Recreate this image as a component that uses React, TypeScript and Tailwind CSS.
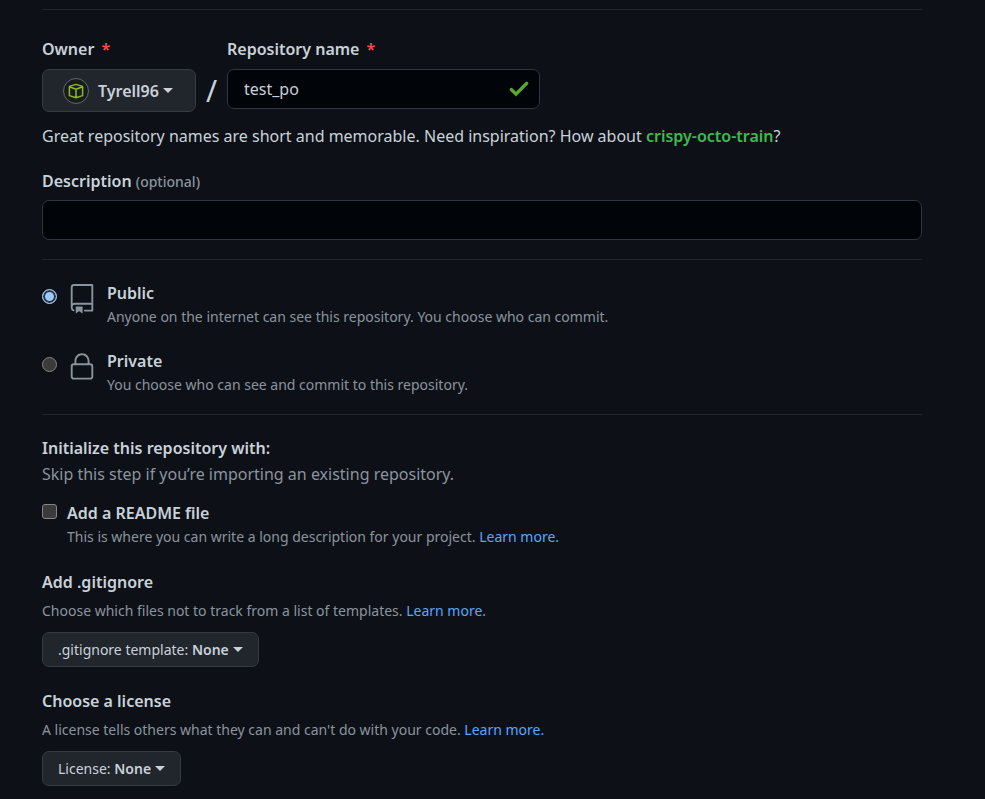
import { useState } from "react";
import type { ReactNode } from "react";

function Caret() {
  return (
    <span
      aria-hidden="true"
      className="inline-block shrink-0 border-x-5 border-t-5 border-x-transparent border-t-current"
    />
  );
}

function Divider() {
  return <hr className="border-0 border-t border-[#21262d]" />;
}

function Required() {
  return <span className="ml-[7px] text-[#f85149]">*</span>;
}

function LearnMore() {
  return (
    <a href="#learn-more" className="text-[#58a6ff]">
      Learn more.
    </a>
  );
}

function Avatar() {
  return (
    <svg width="26" height="26" viewBox="0 0 26 26" fill="none" aria-hidden="true">
      <circle cx="13" cy="13" r="12.5" fill="#171c20" stroke="#62686d" />
      <path
        d="M13 6.4 L19.6 8.4 V17.6 L13 19.8 L6.4 17.6 V8.4 Z M6.4 8.8 L13 11.2 L19.6 8.8 M13 11.2 V19.8"
        stroke="#8fb81a"
        strokeWidth="1.5"
        strokeLinejoin="round"
      />
    </svg>
  );
}

function RepoIcon() {
  return (
    <svg width="30" height="30" viewBox="0 0 24 24" fill="#8b949e" aria-hidden="true">
      <path
        fillRule="evenodd"
        d="M3 2.75A2.75 2.75 0 015.75 0h14.5a.75.75 0 01.75.75v20.5a.75.75 0 01-.75.75h-6a.75.75 0 010-1.5h5.25v-4H6A1.5 1.5 0 004.5 18v.75c0 .716.43 1.334 1.05 1.605a.75.75 0 01-.6 1.374A3.25 3.25 0 013 18.75v-16zM19.5 1.5V15H6c-.546 0-1.059.146-1.5.401V2.75c0-.69.56-1.25 1.25-1.25H19.5z"
      />
      <path d="M7 18.25a.25.25 0 01.25-.25h5a.25.25 0 01.25.25v5.01a.25.25 0 01-.397.201l-2.206-1.604a.25.25 0 00-.294 0L7.397 23.46a.25.25 0 01-.397-.2v-5.01z" />
    </svg>
  );
}

function LockIcon() {
  return (
    <svg width="30" height="30" viewBox="0 0 24 24" fill="#8b949e" aria-hidden="true">
      <path
        fillRule="evenodd"
        d="M6 9V7.25C6 3.845 8.503 1 12 1s6 2.845 6 6.25V9h.5a2.5 2.5 0 012.5 2.5v8a2.5 2.5 0 01-2.5 2.5h-13A2.5 2.5 0 013 19.5v-8A2.5 2.5 0 015.5 9H6zm1.5-1.75C7.5 4.58 9.422 2.5 12 2.5c2.578 0 4.5 2.08 4.5 4.75V9h-9V7.25zm-3 4.25a1 1 0 011-1h13a1 1 0 011 1v8a1 1 0 01-1 1h-13a1 1 0 01-1-1v-8z"
      />
    </svg>
  );
}

function CheckIcon() {
  return (
    <svg width="20" height="16" viewBox="0 0 20 16" fill="none" aria-hidden="true">
      <path
        d="M2.4 8.6 L7 13.2 L17.6 2.4"
        stroke="#57ab2b"
        strokeWidth="3.4"
        strokeLinecap="round"
      />
    </svg>
  );
}

type VisibilityProps = {
  value: string;
  title: string;
  hint: string;
  icon: ReactNode;
  checked: boolean;
  onSelect: (value: string) => void;
};

function VisibilityOption({ value, title, hint, icon, checked, onSelect }: VisibilityProps) {
  return (
    <div className="flex items-start">
      <input
        type="radio"
        name="visibility"
        id={value}
        value={value}
        checked={checked}
        onChange={() => onSelect(value)}
        className="mt-[9px] size-[15px] shrink-0 appearance-none rounded-full border border-[#858585] bg-[#3b3b3b] checked:border-[#99c8ff] checked:bg-[#99c8ff] checked:shadow-[inset_0_0_0_2px_#303236]"
      />
      <label htmlFor={value} className="flex items-start">
        <span className="mt-1 mr-[10px] ml-[10px]">{icon}</span>
        <span className="block">
          <span className="block font-semibold">{title}</span>
          <span className="block text-[14px] leading-[22px] text-[#8b949e]">{hint}</span>
        </span>
      </label>
    </div>
  );
}

type TemplateProps = { title: string; hint: string; label: string };

function TemplatePicker({ title, hint, label }: TemplateProps) {
  return (
    <section>
      <h2 className="font-semibold">{title}</h2>
      <p className="mt-[5px] text-[14px] leading-[22px] text-[#8b949e]">
        {hint} <LearnMore />
      </p>
      <button
        type="button"
        className="mt-[10px] flex h-[35px] items-center gap-1 rounded-[7px] border border-[#363b42] bg-[#21262d] px-[15px] text-[14px]"
      >
        <span>
          {label}: <span className="font-semibold">None</span>
        </span>
        <Caret />
      </button>
    </section>
  );
}

export default function App() {
  const [name, setName] = useState("test_po");
  const [description, setDescription] = useState("");
  const [visibility, setVisibility] = useState("public");

  return (
    <main className="min-h-screen bg-[#0d1117] pt-[9px] pr-[63px] pb-[13px] pl-[42px] font-['Noto_Sans',sans-serif] text-[16px] leading-[26px] text-[#c9d1d9]">
      <Divider />
      <form onSubmit={(event) => event.preventDefault()}>
        <div className="mt-[26px] flex items-start">
          <div className="w-[154px]">
            <label htmlFor="owner" className="block font-semibold">
              Owner
              <Required />
            </label>
            <button
              type="button"
              id="owner"
              className="mt-[7px] flex h-[43px] w-full items-center rounded-[7px] border border-[#363b42] bg-[#21262d] px-5 font-semibold"
            >
              <Avatar />
              <span className="mr-1 ml-[9px]">Tyrell96</span>
              <Caret />
            </button>
          </div>
          <span className="mt-[33px] w-[31px] text-center text-[30px] leading-[43px]">/</span>
          <div className="w-[313px]">
            <label htmlFor="repository" className="block font-semibold">
              Repository name
              <Required />
            </label>
            <div className="mt-[7px] flex h-10 items-center rounded-[7px] border border-[#30363d] bg-[#010409] pr-[10px] pl-4">
              <input
                id="repository"
                type="text"
                value={name}
                onChange={(event) => setName(event.target.value)}
                className="min-w-0 flex-1 bg-transparent outline-none"
              />
              <CheckIcon />
            </div>
          </div>
        </div>
        <p className="mt-[11px]">
          Great repository names are short and memorable. Need inspiration? How about{" "}
          <a href="#suggestion" className="font-semibold text-[#3fb950]">
            crispy-octo-train
          </a>
          ?
        </p>

        <label htmlFor="description" className="mt-[19px] block font-semibold">
          Description{" "}
          <span className="text-[14px] font-medium text-[#8b949e]">(optional)</span>
        </label>
        <input
          id="description"
          type="text"
          value={description}
          onChange={(event) => setDescription(event.target.value)}
          className="mt-[5px] mb-[19px] block h-10 w-full rounded-[7px] border border-[#30363d] bg-[#010409] px-4 outline-none"
        />
        <Divider />

        <div className="mt-5 mb-[18px] flex flex-col gap-5">
          <VisibilityOption
            value="public"
            title="Public"
            hint="Anyone on the internet can see this repository. You choose who can commit."
            icon={<RepoIcon />}
            checked={visibility === "public"}
            onSelect={setVisibility}
          />
          <VisibilityOption
            value="private"
            title="Private"
            hint="You choose who can see and commit to this repository."
            icon={<LockIcon />}
            checked={visibility === "private"}
            onSelect={setVisibility}
          />
        </div>
        <Divider />

        <h2 className="mt-5 font-semibold">Initialize this repository with:</h2>
        <p className="text-[#8b949e]">
          Skip this step if you’re importing an existing repository.
        </p>
        <div className="mt-[13px] mb-[21px] flex items-start">
          <input
            id="readme"
            type="checkbox"
            className="mt-[4px] mr-[10px] size-[15px] shrink-0 appearance-none rounded-[3px] border border-[#858585] bg-[#3b3b3b] checked:bg-[#99c8ff]"
          />
          <div>
            <label htmlFor="readme" className="block font-semibold">
              Add a README file
            </label>
            <p className="text-[14px] leading-[22px] text-[#8b949e]">
              This is where you can write a long description for your project. <LearnMore />
            </p>
          </div>
        </div>

        <div className="flex flex-col gap-[21px]">
          <TemplatePicker
            title="Add .gitignore"
            hint="Choose which files not to track from a list of templates."
            label=".gitignore template"
          />
          <TemplatePicker
            title="Choose a license"
            hint="A license tells others what they can and can't do with your code."
            label="License"
          />
        </div>
      </form>
    </main>
  );
}
